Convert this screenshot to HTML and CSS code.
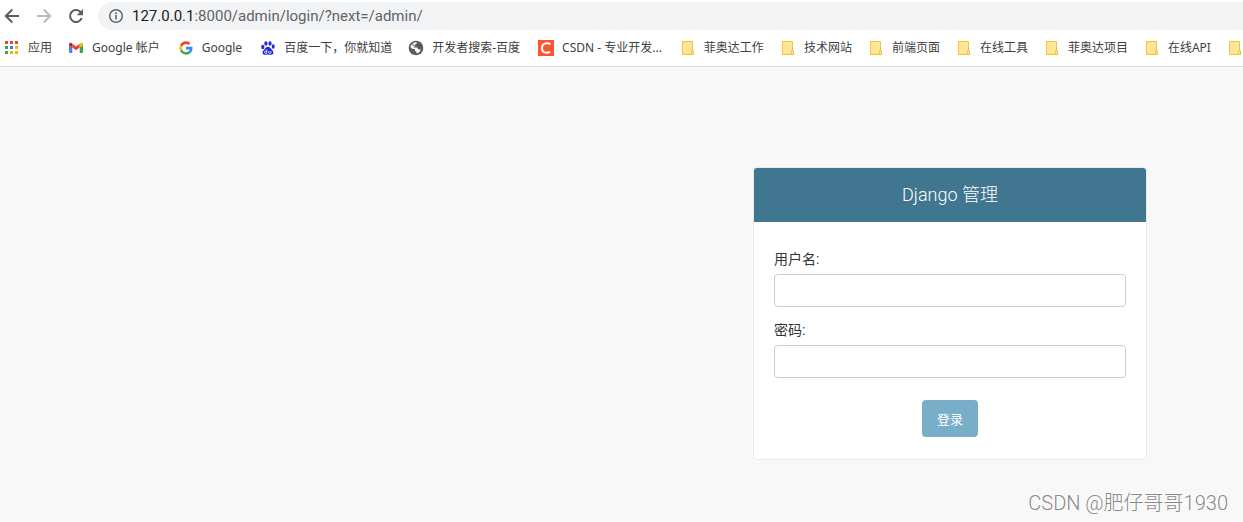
FILE: index.html
```html
<!DOCTYPE html>
<html lang="zh-CN">
<head>
<meta charset="utf-8">
<title>登录 | Django 管理</title>
<link rel="stylesheet" href="styles.css">
</head>
<body>
<svg class="defs" aria-hidden="true">
  <symbol id="folder" viewBox="0 0 16 16"><path d="M2.500 1.500h10v9.500h1v3.500h-11z" fill="#ffe694" stroke="#e8c446"/><path d="M11.500 14.500v-3.500h2v3.500z" fill="#fff0b8" stroke="#e8c446"/></symbol>
</svg>
<div class="browser">
  <header class="chrome">
    <div class="toolbar">
      <button class="nav" aria-label="后退"><svg viewBox="0 0 16 16"><path d="M15 8H2M8.300 1.500 1.800 8l6.500 6.500" fill="none" stroke="#5a5e63" stroke-width="2"/></svg></button>
      <button class="nav" aria-label="前进"><svg viewBox="0 0 16 16"><path d="M1 8h13M7.700 1.500 14.200 8l-6.500 6.500" fill="none" stroke="#babcbe" stroke-width="2"/></svg></button>
      <button class="nav" aria-label="重新加载"><svg viewBox="0 0 16 16"><path d="M13.700 10A6 6 0 1 1 12.300 3.800L14 5.500" fill="none" stroke="#5a5e63" stroke-width="2"/><path d="M15 1v6.300H8.700z" fill="#5a5e63"/></svg></button>
      <div class="address">
        <svg class="info" viewBox="0 0 16 16"><circle cx="8" cy="8" r="6.300" fill="none" stroke="#5f6368" stroke-width="1.500"/><path d="M8 7v4.500M8 4.300v1.600" stroke="#5f6368" stroke-width="1.600"/></svg>
        <span class="url"><span class="host">127.0.0.1</span>:8000/admin/login/?next=/admin/</span>
      </div>
    </div>
    <nav class="bookmarks">
      <a href="#"><svg viewBox="0 0 16 16"><path fill="#ea4335" d="M1 1h3v3H1zM6 1h3v3H6zM11 1h3v3h-3z"/><path fill="#34a853" d="M1 6h3v3H1zM1 11h3v3H1z"/><path fill="#1a87f0" d="M6 6h3v3H6z"/><path fill="#fbb400" d="M11 6h3v3h-3zM6 11h3v3H6zM11 11h3v3h-3z"/></svg><span>应用</span></a>
      <a class="site" href="#"><svg viewBox="0 0 16 16"><path fill="#4285f4" d="M1 5l3.300 2.400V13H2a1 1 0 0 1-1-1z"/><path fill="#34a853" d="M15 5l-3.300 2.400V13H14a1 1 0 0 0 1-1z"/><path fill="#ea4335" d="M4.300 3.800 8 6.600l3.700-2.800v3.700L8 10.300 4.300 7.500z"/><path fill="#c5221f" d="M1 4.500C1 2.800 2.800 2.300 4.300 3.600v4L1 5.200z"/><path fill="#fbbc04" d="M15 4.500c0-1.700-1.800-2.200-3.300-.9v4L15 5.200z"/></svg><span>Google 帐户</span></a>
      <a class="site" href="#"><svg viewBox="0 0 48 48"><path fill="#ea4335" d="M24 12c3 0 5.400 1 7.400 2.900l5.500-5.500C33.500 6.200 29.100 4 24 4 16.200 4 9.500 8.500 6.200 15l6.400 5C14.100 15.300 18.600 12 24 12z"/><path fill="#4285f4" d="M43.600 24.500c0-1.500-.1-2.800-.4-4H24v8h11c-.5 2.600-2 4.700-4.100 6.100l6.400 4.900c3.900-3.600 6.300-8.800 6.300-15z"/><path fill="#fbbc04" d="M12.600 28.200a12 12 0 0 1 0-8.200l-6.400-5a20 20 0 0 0 0 18.200z"/><path fill="#34a853" d="M24 44c5.300 0 9.900-1.800 13.300-4.700l-6.400-4.900c-1.800 1.200-4.200 2-6.900 2-5.300 0-9.800-3.400-11.400-8.200l-6.400 5C9.500 39.600 16.200 44 24 44z"/></svg><span>Google</span></a>
      <a href="#"><svg viewBox="0 0 16 16"><g fill="#2529d8"><ellipse cx="2.800" cy="7" rx="1.600" ry="2.200"/><ellipse cx="5.900" cy="3.500" rx="1.600" ry="2.300"/><ellipse cx="10" cy="3.500" rx="1.600" ry="2.300"/><ellipse cx="13.200" cy="6.500" rx="1.500" ry="2.200"/><path d="M8 6.700c2 0 2.600 1.700 4 3 1.800 1.600 2.200 4.800-.7 5.100-1.400.1-2-.3-3.300-.3s-2 .4-3.300.3C1.800 14.500 2 11.300 4 9.700c1.400-1.300 2-3 4-3z"/></g><path d="M6.800 9.500v3.800H5.600c-1.400 0-1.400-2.300 0-2.300h1.200M8.700 11v1.600c0 .5.300.7.700.7h1.500V11" fill="none" stroke="#fff" stroke-width=".8"/></svg><span>百度一下，你就知道</span></a>
      <a class="site" href="#"><svg viewBox="0 0 16 16"><circle cx="8" cy="8" r="7.300" fill="#5a5e63"/><path d="M8.800 2.400 8.500 4l-1.900.8v1.900L5 7.500h4.200l.8 1.700 2.600.4c-.3 2-2 3.700-4 4v-1.700L6.800 10.600l.2-1.500H4.600L2.400 6.900a5.700 5.700 0 0 1 6.400-4.500z" fill="#fff"/><path d="M3.600 4.300 6.400 5.500M9.800 4.200l1.700 1.600 1.800.4" stroke="#5a5e63" stroke-width="1"/></svg><span>开发者搜索-百度</span></a>
      <a class="site" href="#"><svg viewBox="0 0 16 16"><path fill="#fc5531" d="M0 0h16v16H0z"/><path d="M12.600 4.200C8.500 2 3.900 3.600 3.900 8.200c0 4.300 4 5.600 8.200 3.700" fill="none" stroke="#fff" stroke-width="2"/></svg><span>CSDN - 专业开发...</span></a>
      <a href="#"><svg><use href="#folder"/></svg><span>菲奥达工作</span></a>
      <a href="#"><svg><use href="#folder"/></svg><span>技术网站</span></a>
      <a href="#"><svg><use href="#folder"/></svg><span>前端页面</span></a>
      <a href="#"><svg><use href="#folder"/></svg><span>在线工具</span></a>
      <a href="#"><svg><use href="#folder"/></svg><span>菲奥达项目</span></a>
      <a href="#"><svg><use href="#folder"/></svg><span>在线API</span></a>
      <a href="#" aria-label="书签文件夹"><svg><use href="#folder"/></svg></a>
    </nav>
  </header>
  <main class="page">
    <section class="card">
      <h1 class="brand">Django 管理</h1>
      <form class="login">
        <div class="field"><label for="username">用户名:</label><input id="username" type="text"></div>
        <div class="field"><label for="password">密码:</label><input id="password" type="password"></div>
        <button class="submit" type="submit">登录</button>
      </form>
    </section>
  </main>
  <div class="watermark">CSDN @肥仔哥哥1930</div>
</div>
</body>
</html>
```
FILE: styles.css
```css
* { box-sizing: border-box; }
body {
  margin: 0;
  background: #f8f8f8;
  font-family: "Noto Sans", "Noto Sans CJK SC", sans-serif;
  color: #333;
}
.defs { position: absolute; width: 0; height: 0; }
.browser {
  position: relative;
  display: flex;
  flex-direction: column;
  min-height: 100vh;
  overflow: hidden;
}
.chrome {
  background: #fff;
  border-bottom: 1px solid #dadce0;
}
.toolbar {
  display: flex;
  align-items: center;
  gap: 16px;
  padding: 2px 0 0 4px;
}
.nav {
  width: 16px;
  height: 16px;
  padding: 0;
  border: 0;
  background: none;
}
.nav svg { display: block; width: 16px; height: 16px; }
.address {
  display: flex;
  flex: 1;
  align-items: center;
  gap: 8px;
  height: 28px;
  margin-left: -2px;
  padding-left: 10px;
  border-radius: 14px 0 0 14px;
  background: #f1f3f4;
}
.info { width: 16px; height: 16px; }
.url {
  font-family: Roboto, sans-serif;
  font-size: 15px;
  line-height: 28px;
  color: #5f6368;
}
.host { color: #202124; }
.bookmarks {
  display: flex;
  align-items: center;
  gap: 16px;
  height: 36px;
  padding-left: 4px;
  overflow: hidden;
}
.bookmarks a {
  display: flex;
  flex: none;
  align-items: center;
  gap: 8px;
  font-size: 12px;
  line-height: 16px;
  color: #3c4043;
  text-decoration: none;
  white-space: nowrap;
}
.bookmarks .site { padding-right: 2px; }
.bookmarks svg { width: 16px; height: 16px; }
.page {
  display: flex;
  flex: 1;
  align-items: flex-start;
  justify-content: flex-end;
  padding: 100px 96px 62px;
}
.card {
  width: 394px;
  border: 1px solid #eaeaea;
  border-radius: 4px;
  background: #fff;
  overflow: hidden;
}
.brand {
  margin: 0;
  padding: 15px 20px;
  background: #417690;
  color: #fff;
  font-family: Roboto, "Noto Sans CJK SC", sans-serif;
  font-size: 18px;
  font-weight: 300;
  line-height: 24px;
  text-align: center;
}
.login {
  display: flex;
  flex-direction: column;
  align-items: center;
  gap: 12px;
  padding: 26px 20px 22px;
}
.field {
  display: flex;
  flex-direction: column;
  gap: 4px;
  width: 100%;
}
.field label {
  font-family: Roboto, "Noto Sans CJK SC", sans-serif;
  font-size: 14px;
  line-height: 22px;
}
.field input {
  height: 33px;
  padding: 8px;
  border: 1px solid #ccc;
  border-radius: 4px;
  background: #fff;
  font-size: 14px;
}
.submit {
  height: 37px;
  margin-top: 10px;
  padding: 0 15px;
  border: 0;
  border-radius: 4px;
  background: #79aec8;
  color: #fff;
  font-family: Roboto, "Noto Sans CJK SC", sans-serif;
  font-size: 13px;
}
.watermark {
  position: absolute;
  right: 15px;
  bottom: 5px;
  color: #888;
  font-family: Roboto, "Noto Sans CJK SC", sans-serif;
  font-size: 20px;
  font-weight: 300;
  line-height: 28px;
  text-shadow: -1px -1px 0 #fff;
}
```
